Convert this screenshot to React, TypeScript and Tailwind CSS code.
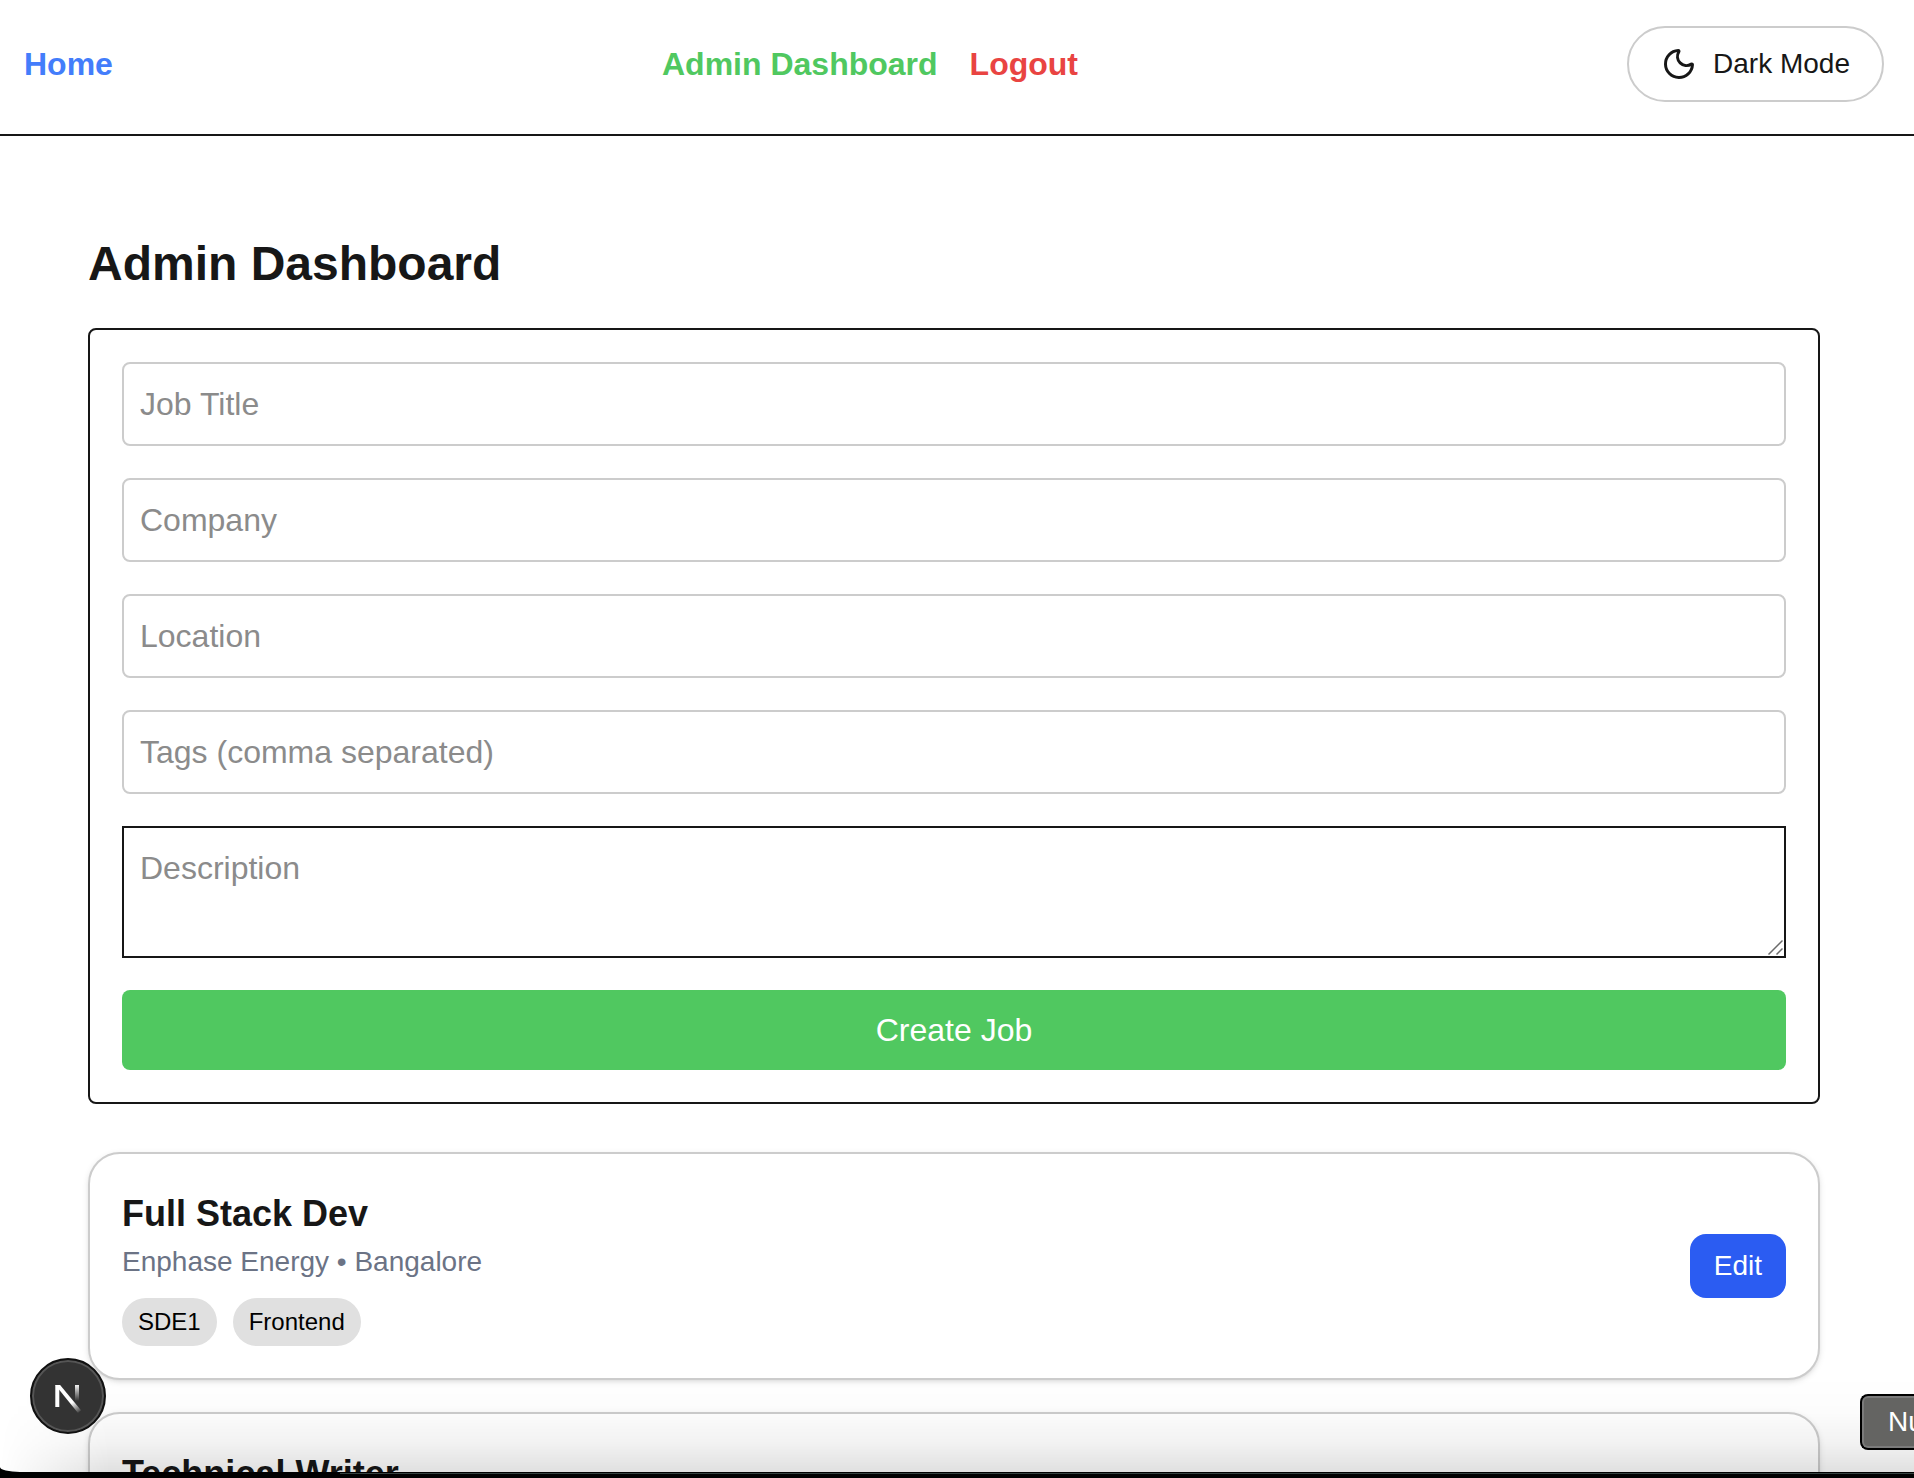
import { useState } from "react";
import { Moon } from "lucide-react";

const jobs = [
  { title: "Full Stack Dev", company: "Enphase Energy", location: "Bangalore", tags: ["SDE1", "Frontend"] },
  { title: "Technical Writer", company: "", location: "", tags: [] as string[] },
];

const fields = [
  { id: "title", label: "Job Title" },
  { id: "company", label: "Company" },
  { id: "location", label: "Location" },
  { id: "tags", label: "Tags (comma separated)" },
];

function Header() {
  return (
    <header className="flex items-center justify-between border-b-2 border-[#171717] pt-[26px] pr-[30px] pb-8 pl-6">
      <a href="#home" className="text-[32px] leading-12 font-bold text-[#437dfb]">Home</a>
      <nav className="flex gap-8 text-[32px] leading-12 font-bold">
        <a href="#admin" className="text-[#50c860]">Admin Dashboard</a>
        <a href="#logout" className="text-[#e94442]">Logout</a>
      </nav>
      <button type="button" className="flex items-center gap-4 rounded-full border-2 border-[#cccccc] px-8 py-4 text-[28px] leading-10">
        <Moon className="size-9" aria-hidden="true" />
        Dark Mode
      </button>
    </header>
  );
}

function JobForm() {
  const [values, setValues] = useState<Record<string, string>>({});
  const set = (id: string, value: string) => setValues((v) => ({ ...v, [id]: value }));
  return (
    <form className="flex flex-col gap-8 rounded-lg border-2 border-[#171717] p-8 text-[32px] leading-12" onSubmit={(e) => e.preventDefault()}>
      {fields.map((f) => (
        <input
          key={f.id}
          aria-label={f.label}
          placeholder={f.label}
          value={values[f.id] ?? ""}
          onChange={(e) => set(f.id, e.target.value)}
          className="h-[84px] w-full rounded-lg border-2 border-[#cccccc] px-4 py-4 placeholder:text-[#8b8b8b]"
        />
      ))}
      <div className="relative flex">
        <textarea
          aria-label="Description"
          placeholder="Description"
          rows={2}
          value={values.description ?? ""}
          onChange={(e) => set("description", e.target.value)}
          className="w-full resize-none border-2 border-[#171717] p-4 placeholder:text-[#8b8b8b]"
        />
        <svg className="pointer-events-none absolute right-[3px] bottom-[3px] size-4" viewBox="0 0 16 16" fill="none" stroke="#6b6b6b" strokeWidth="1.5" aria-hidden="true">
          <path d="M1.5 15.5 15.5 1.5M9.5 15.5l6-6" />
        </svg>
      </div>
      <button type="submit" className="rounded-lg bg-[#50c860] py-4 text-white">Create Job</button>
    </form>
  );
}

function JobCard({ job }: { job: (typeof jobs)[number] }) {
  return (
    <li className="flex min-h-[228px] items-center justify-between rounded-[32px] border-2 border-[#cccccc] bg-white p-8 shadow-[0_2px_6px_rgba(0,0,0,0.1),0_2px_4px_-2px_rgba(0,0,0,0.1)]">
      <div className="self-start">
        <h2 className="text-4xl leading-14 font-bold">{job.title}</h2>
        {job.company && (
          <p className="text-[28px] leading-10 text-[#6b7385]">{job.company} • {job.location}</p>
        )}
        {job.tags.length > 0 && (
          <div className="mt-4 flex gap-4">
            {job.tags.map((t) => (
              <span key={t} className="rounded-full bg-[#e0e0e0] px-4 py-2 text-2xl leading-8 text-black">{t}</span>
            ))}
          </div>
        )}
      </div>
      {job.company && (
        <button type="button" className="rounded-2xl bg-[#2b5cf2] px-6 py-3 text-[28px] leading-10 text-white">Edit</button>
      )}
    </li>
  );
}

function DevBadge() {
  return (
    <button type="button" aria-label="Open developer tools" className="absolute bottom-[38px] left-[30px] flex size-[76px] items-center justify-center rounded-full border-2 border-[#111111] bg-[#333333] shadow-[inset_0_0_0_2px_#555555]">
      <svg className="size-10" viewBox="0 0 40 40" fill="none" aria-hidden="true">
        <defs>
          <linearGradient id="stem" x1="0" y1="8" x2="0" y2="25" gradientUnits="userSpaceOnUse">
            <stop stopColor="#fff" />
            <stop offset="1" stopColor="#fff" stopOpacity="0" />
          </linearGradient>
          <linearGradient id="diagonal" x1="25" y1="26" x2="32" y2="37" gradientUnits="userSpaceOnUse">
            <stop stopColor="#fff" />
            <stop offset="1" stopColor="#fff" stopOpacity="0" />
          </linearGradient>
        </defs>
        <path d="M9.3 31V9" stroke="#fff" strokeWidth="4" />
        <path d="M7.3 9h4.8L33 34.2 30 37z" fill="url(#diagonal)" />
        <path d="M29 9v16" stroke="url(#stem)" strokeWidth="4" />
      </svg>
    </button>
  );
}

export default function App() {
  return (
    <div className="flex h-screen flex-col bg-black font-['Liberation_Sans',Arial,sans-serif] text-[#171717]">
      <div className="relative min-h-0 flex-1 overflow-hidden rounded-bl-[20px_5px] bg-white">
        <Header />
        <main className="pt-24 pr-[94px] pl-[88px]">
          <h1 className="mb-8 text-5xl leading-16 font-bold">Admin Dashboard</h1>
          <JobForm />
          <ul className="mt-12 flex flex-col gap-8">
            {jobs.map((job) => (
              <JobCard key={job.title} job={job} />
            ))}
          </ul>
        </main>
        <div className="pointer-events-none absolute right-0 bottom-0 left-0 h-24 bg-[linear-gradient(to_bottom,transparent,rgba(0,0,0,0.012)_38%,rgba(0,0,0,0.05)_70%,rgba(0,0,0,0.12))] [mask-image:linear-gradient(to_right,transparent,black_110px)]" />
        <DevBadge />
        <div role="tooltip" className="absolute right-0 bottom-[22px] w-[54px] overflow-hidden rounded-l-lg border-2 border-r-0 border-black bg-[#646462] py-2 pl-6.5 text-[28px] leading-9 whitespace-nowrap text-white shadow-[inset_2px_0_0_#7b7b7b,inset_0_2px_0_#7b7b7b,inset_0_-2px_0_#7b7b7b]">
          Nu
        </div>
      </div>
      <div className="h-1.5 pt-px pl-[340px]">
        <div className="h-px bg-[#35423f]" />
      </div>
    </div>
  );
}
